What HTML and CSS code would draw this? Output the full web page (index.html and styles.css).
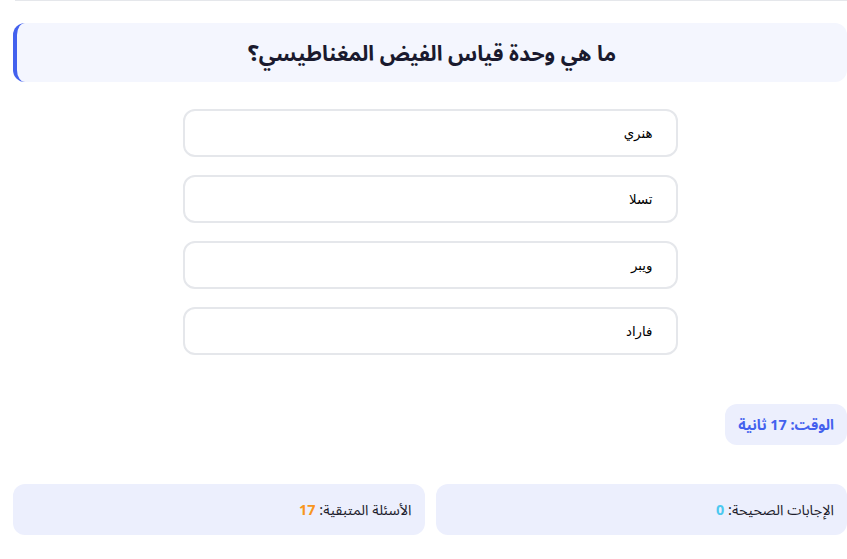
FILE: index.html
```html
<!DOCTYPE html>
<html lang="ar" dir="rtl">
<head>
    <meta charset="UTF-8">
    <meta name="viewport" content="width=device-width, initial-scale=1.0">
    <title>اختبار الفيزياء</title>
    <link rel="stylesheet" href="styles.css">
</head>
<body>
    <div class="quiz">
        <div class="divider"></div>

        <div class="question">
            <h2>ما هي وحدة قياس الفيض المغناطيسي؟</h2>
        </div>

        <div class="options">
            <button class="option">هنري</button>
            <button class="option">تسلا</button>
            <button class="option">ويبر</button>
            <button class="option">فاراد</button>
        </div>

        <div class="timer-row">
            <div class="timer">الوقت: <span id="time">17</span> ثانية</div>
        </div>

        <div class="stats">
            <div class="stat">الإجابات الصحيحة: <span class="correct">0</span></div>
            <div class="stat">الأسئلة المتبقية: <span class="remaining">17</span></div>
        </div>
    </div>
</body>
</html>
```

FILE: styles.css
```css
body {
    margin: 0;
    background: #fff;
    color: #1e293b;
    font-family: "Noto Sans", "Noto Sans Arabic", sans-serif;
}
.quiz {
    margin-left: 13px;
}
.divider {
    height: 1px;
    background: #e5e7eb;
    margin-left: 2px;
}
.question {
    margin-top: 22px;
    background: #f4f6fe;
    border-left: 4px solid #4361ee;
    border-radius: 12px;
    padding: 14px 20px;
    text-align: center;
}
.question h2 {
    margin: 0;
    font-size: 21.3px;
    line-height: 31px;
    font-weight: 700;
    color: #1a1a2e;
}
.options {
    width: 495px;
    margin: 27px auto 0;
    display: flex;
    flex-direction: column;
    gap: 18px;
}
.option {
    height: 48px;
    padding: 0 23px;
    background: #fff;
    border: 2px solid #e5e7eb;
    border-radius: 12px;
    text-align: right;
    font-family: "DejaVu Sans", sans-serif;
    font-size: 13.33px;
    color: #000;
    cursor: pointer;
}
.option:hover {
    border-color: #4361ee;
}
.timer-row {
    margin-top: 49px;
    display: flex;
}
.timer {
    background: #eceffd;
    color: #4361ee;
    font-weight: 700;
    font-size: 14.4px;
    line-height: 21px;
    padding: 10px 13px;
    border-radius: 12px;
}
.stats {
    margin-top: 39px;
    display: grid;
    grid-template-columns: 1fr 1fr;
    gap: 11px;
}
.stat {
    background: #eceffd;
    border-radius: 12px;
    padding: 15px 13px;
    font-size: 14.4px;
    line-height: 21px;
    color: #1e1e2e;
}
.correct {
    color: #4cc9f0;
    font-weight: 700;
}
.remaining {
    color: #f8961e;
    font-weight: 700;
}
```
